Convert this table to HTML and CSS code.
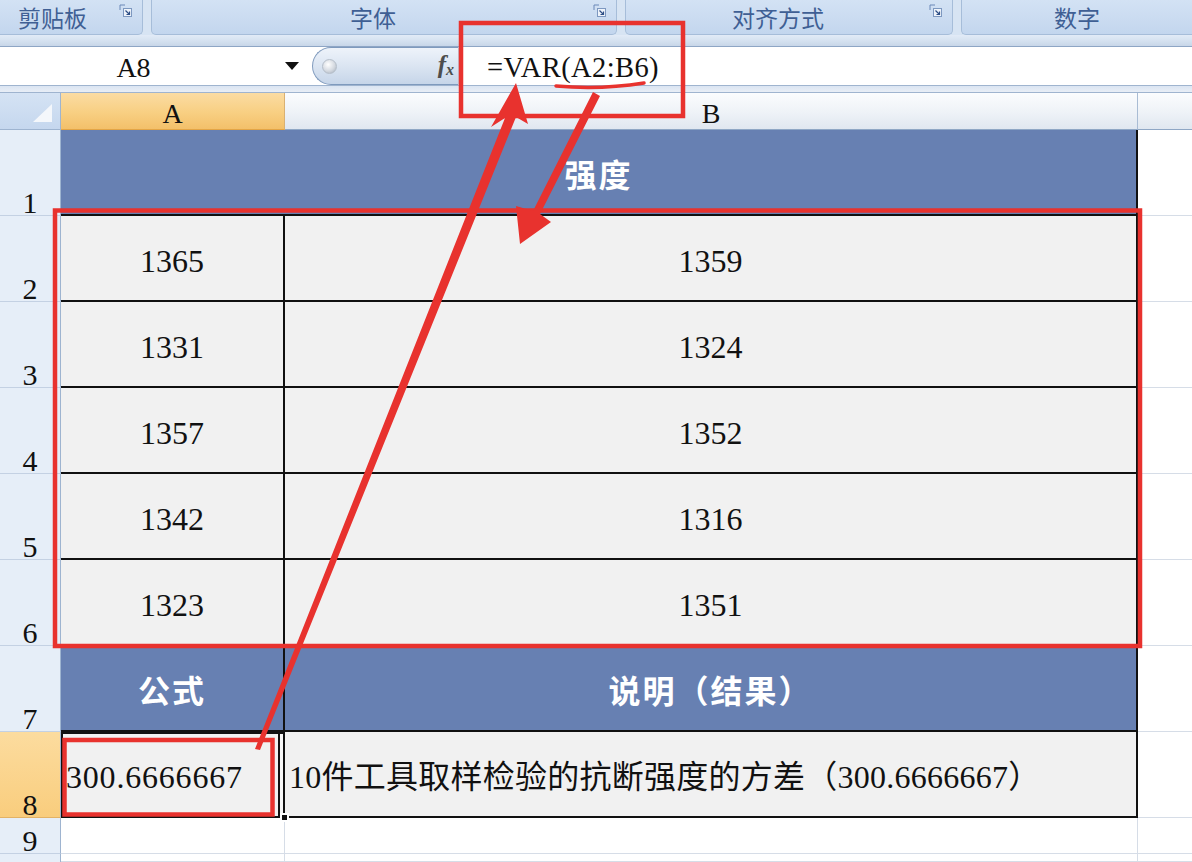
FILE: index.html
```html
<!DOCTYPE html>
<html lang="zh-CN">
<head>
<meta charset="utf-8">
<title>VAR</title>
<link rel="stylesheet" href="styles.css">
</head>
<body>
<div class="app">
  <div class="ribbon">
    <div class="grp g1"><span class="lbl">剪贴板</span><svg class="launch" width="14" height="14" viewBox="0 0 14 14"><path d="M1 6V1h5" stroke="#6b88b8" fill="none"/><rect x="4.5" y="4.5" width="8" height="8" fill="#eef3fa" stroke="#7d98c0"/><path d="M6.5 6.5l4 4M10.5 7.5v3h-3" stroke="#2e4f86" fill="none" stroke-width="1.2"/></svg></div>
    <div class="grp g2"><span class="lbl">字体</span><svg class="launch" width="14" height="14" viewBox="0 0 14 14"><path d="M1 6V1h5" stroke="#6b88b8" fill="none"/><rect x="4.5" y="4.5" width="8" height="8" fill="#eef3fa" stroke="#7d98c0"/><path d="M6.5 6.5l4 4M10.5 7.5v3h-3" stroke="#2e4f86" fill="none" stroke-width="1.2"/></svg></div>
    <div class="grp g3"><span class="lbl">对齐方式</span><svg class="launch" width="14" height="14" viewBox="0 0 14 14"><path d="M1 6V1h5" stroke="#6b88b8" fill="none"/><rect x="4.5" y="4.5" width="8" height="8" fill="#eef3fa" stroke="#7d98c0"/><path d="M6.5 6.5l4 4M10.5 7.5v3h-3" stroke="#2e4f86" fill="none" stroke-width="1.2"/></svg></div>
    <div class="grp g4"><span class="lbl">数字</span></div>
  </div>
  <div class="band"></div>
  <div class="fbar">
    <div class="namebox"><span class="nb-text">A8</span><span class="dd"></span></div>
    <div class="pill"><span class="knob"></span><span class="fx">f<sub>x</sub></span></div>
    <div class="formula">=VAR(A2:B6)</div>
  </div>
  <div class="fgap"></div>
  <div class="sheet">
    <div class="corner"><svg width="60" height="37" viewBox="0 0 60 37"><path d="M33 29L52 11V29Z" fill="#f4f7fb"/></svg></div>
    <div class="ch ch-sel">A</div>
    <div class="ch">B</div>
    <div class="ch ch-c"></div>

    <div class="rh">1</div>
    <div class="tt title">强度</div>
    <div class="cc"></div>

    <div class="rh">2</div>
    <div class="td a">1365</div>
    <div class="td">1359</div>
    <div class="cc"></div>

    <div class="rh">3</div>
    <div class="td a">1331</div>
    <div class="td">1324</div>
    <div class="cc"></div>

    <div class="rh">4</div>
    <div class="td a">1357</div>
    <div class="td">1352</div>
    <div class="cc"></div>

    <div class="rh">5</div>
    <div class="td a">1342</div>
    <div class="td">1316</div>
    <div class="cc"></div>

    <div class="rh">6</div>
    <div class="td a">1323</div>
    <div class="td">1351</div>
    <div class="cc"></div>

    <div class="rh">7</div>
    <div class="tt a">公式</div>
    <div class="tt">说明（结果）</div>
    <div class="cc"></div>

    <div class="rh rh-sel">8</div>
    <div class="td a left active result">300.6666667<span class="handle"></span></div>
    <div class="td left desc">10件工具取样检验的抗断强度的方差（300.6666667）</div>
    <div class="cc"></div>

    <div class="rh">9</div>
    <div class="ec a"></div>
    <div class="ec"></div>
    <div class="cc"></div>

    <div class="rh rh-last"></div>
    <div class="ec a"></div>
    <div class="ec"></div>
    <div class="cc"></div>
  </div>

  <svg class="annot" width="1192" height="862" viewBox="0 0 1192 862">
    <g fill="none" stroke="#e8322e" stroke-width="4.5">
      <rect x="461" y="23" width="222" height="93"/>
      <rect x="55" y="210.5" width="1085" height="435.5"/>
      <rect x="64.5" y="740" width="208" height="74.5"/>
    </g>
    <path d="M556 86 Q600 90 644 83" fill="none" stroke="#e8322e" stroke-width="3.5" stroke-linecap="round"/>
    <polygon fill="#e8322e" points="516,83 528,124 516,117 260,750 255,749 505,118 491,127"/>
    <polygon fill="#e8322e" points="593,92 600,96 540,214 551,222 520,244 516,206 533,211"/>
  </svg>
</div>
</body>
</html>
```

FILE: styles.css
```css
* { box-sizing: border-box; }
html, body { margin: 0; padding: 0; }
body {
  width: 1192px;
  height: 862px;
  overflow: hidden;
  background: #ffffff;
  font-family: "Liberation Serif", "Noto Sans CJK SC", serif;
}
.app {
  position: relative;
  width: 1192px;
  height: 862px;
  display: flex;
  flex-direction: column;
}

/* ribbon */
.ribbon {
  display: flex;
  gap: 8px;
  height: 35px;
  background: #d7e4f3;
}
.grp {
  position: relative;
  display: flex;
  align-items: center;
  justify-content: center;
  background: linear-gradient(#d3e2f4, #c3d6ee);
  border: 1px solid #a6bdd9;
  border-top: none;
  border-radius: 0 0 5px 5px;
  color: #3f5f94;
  font-family: "Noto Sans CJK SC", sans-serif;
  font-size: 23px;
  padding-right: 22px;
}
.lbl { line-height: 30px; }
.g1 { width: 143px; justify-content: flex-start; padding-left: 18px; border-left: none; border-radius: 0 0 5px 0; }
.g2 { width: 466px; }
.g3 { width: 328px; }
.g4 { flex: 1; padding-right: 0; border-right: none; border-radius: 0 0 0 5px; }
.launch { position: absolute; top: 4px; right: 9px; }

.band {
  height: 12px;
  background: linear-gradient(#e2ebf7 0%, #d3e0ef 60%, #c8d6e8 100%);
  border-bottom: 1px solid #8ea6c5;
}

/* formula bar */
.fbar {
  display: flex;
  height: 38px;
  background: #ffffff;
}
.namebox {
  width: 312px;
  display: flex;
  align-items: center;
  padding-right: 12px;
  padding-top: 4px;
}
.nb-text {
  flex: 1;
  text-align: center;
  font-size: 28px;
  color: #111;
  padding-left: 2px;
  padding-right: 20px;
  line-height: 1;
}
.dd {
  width: 0;
  height: 0;
  border-left: 7px solid transparent;
  border-right: 7px solid transparent;
  border-top: 8px solid #111;
  margin-right: 1px;
  margin-top: -4px;
}
.pill {
  width: 146px;
  display: flex;
  align-items: center;
  justify-content: space-between;
  padding: 0 4px 0 9px;
  background: linear-gradient(#eef3fa 0%, #dbe5f2 50%, #c6d5e9 100%);
  border: 1px solid #7f9abd;
  border-right: none;
  border-radius: 19px 0 0 19px;
}
.knob {
  width: 15px;
  height: 15px;
  border-radius: 50%;
  background: radial-gradient(circle at 40% 35%, #ffffff 0%, #d5dae1 55%, #a3adba 100%);
  border: 1px solid #b5bec9;
}
.fx {
  font-family: "Liberation Serif", serif;
  font-style: italic;
  font-weight: bold;
  font-size: 25px;
  color: #4d4d4d;
  line-height: 1;
  margin-top: -2px;
}
.fx sub { font-size: 16px; vertical-align: -2px; }
.formula {
  flex: 1;
  display: flex;
  align-items: center;
  padding-left: 28px;
  padding-top: 5px;
  border-left: 1px solid #c3cfdf;
  font-size: 28.5px;
  letter-spacing: 0.4px;
  color: #111;
  line-height: 1;
}
.fgap {
  height: 8px;
  background: linear-gradient(#dbe5f2, #e8eef6);
  border-top: 1px solid #9fb4cf;
  border-bottom: 1px solid #9fb4cf;
}

/* sheet */
.sheet {
  flex: 1;
  display: grid;
  grid-template-columns: 61px 224px 853px 1fr;
  grid-template-rows: 37px repeat(8, 86px) 36px 1fr;
  background: #ffffff;
}
.corner {
  background: linear-gradient(#d5e3f4, #c5d7ee);
  border-right: 1px solid #9eb4d0;
  border-bottom: 1px solid #9eb4d0;
  overflow: hidden;
}
.corner svg { display: block; }
.ch {
  display: flex;
  align-items: center;
  justify-content: center;
  background: linear-gradient(#fbfcfe 0%, #eef2f7 55%, #e0e7f0 100%);
  border-right: 1px solid #a9bcd4;
  border-bottom: 1px solid #8fa7c5;
  font-size: 28px;
  color: #111;
  line-height: 1;
  padding-top: 5px;
}
.ch-sel {
  background: linear-gradient(#fbdca3 0%, #f8cf82 55%, #f3c06a 100%);
  border-bottom: 1px solid #e3a546;
  border-right: 1px solid #d9b173;
}
.ch-c { border-right: none; }

.rh {
  display: flex;
  align-items: flex-end;
  justify-content: center;
  background: #e6eef8;
  border-right: 1px solid #9eb4d0;
  border-bottom: 1px solid #c4d1e3;
  font-size: 30px;
  line-height: 22px;
  padding-bottom: 1px;
  color: #111;
}
.rh-sel { background: linear-gradient(#fcdc9f, #f9cd7d); border-bottom-color: #e2b266; }
.rh-last { border-bottom: none; }

.title {
  grid-column: span 2;
}
.tt {
  display: flex;
  align-items: center;
  justify-content: center;
  background: #6780b2;
  color: #ffffff;
  font-family: "Noto Sans CJK SC", sans-serif;
  font-weight: bold;
  font-size: 32px;
  letter-spacing: 2px;
  border-right: 2px solid #111;
  border-bottom: 2px solid #111;
  padding-top: 2px;
}
.td {
  position: relative;
  display: flex;
  align-items: center;
  justify-content: center;
  background: #f1f1f1;
  border-right: 2px solid #111;
  border-bottom: 2px solid #111;
  font-size: 32px;
  color: #111;
  line-height: 1;
  padding-top: 6px;
}
.td.left { justify-content: flex-start; padding-left: 5px; }
.td.result { letter-spacing: 0.8px; }
.td.desc { letter-spacing: 0.25px; padding-left: 4px; }
.active {
  box-shadow: inset 0 2px 0 #111, inset 2px 0 0 #111, inset -3px 0 0 #f7f7f7, inset -5px 0 0 #111;
}
.handle {
  position: absolute;
  right: -6px;
  bottom: -6px;
  width: 9px;
  height: 9px;
  background: #111;
  border: 2px solid #ffffff;
  z-index: 2;
}
.cc {
  background: #ffffff;
  border-bottom: 1px solid #d6dde7;
}
.ec {
  background: #ffffff;
  border-right: 1px solid #d6dde7;
  border-bottom: 1px solid #d6dde7;
}

/* annotations */
.annot {
  position: absolute;
  left: 0;
  top: 0;
  pointer-events: none;
  z-index: 5;
}
```
